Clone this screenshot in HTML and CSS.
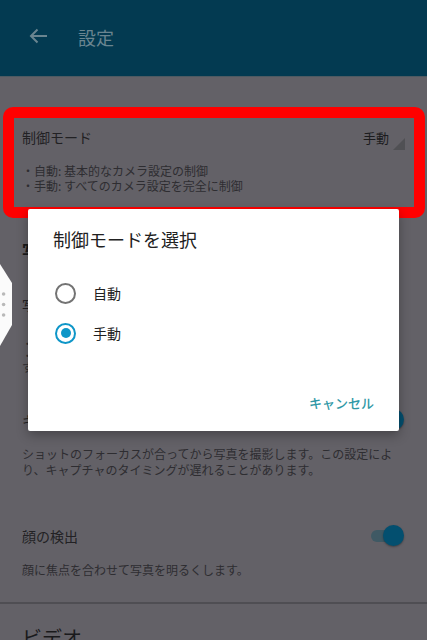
FILE: index.html
```html
<!DOCTYPE html>
<html lang="ja">
<head>
<meta charset="utf-8">
<title>設定</title>
<link rel="stylesheet" href="styles.css">
</head>
<body>
<header class="appbar">
  <svg class="back" width="19" height="16" viewBox="0 0 19 16"><path d="M18 8H2M8.5 1.5L2 8l6.5 6.5" fill="none" stroke="currentColor" stroke-width="2"/></svg>
  <h1 class="appbar-title">設定</h1>
</header>

<main class="content">
  <section class="pref pref-mode">
    <div class="pref-row">
      <span class="pref-title">制御モード</span>
      <span class="spinner">手動<span class="spinner-tri"></span></span>
    </div>
    <p class="pref-desc">・自動: 基本的なカメラ設定の制御<br>・手動: すべてのカメラ設定を完全に制御</p>
  </section>

  <h2 class="cat cat-photo">写真</h2>

  <section class="pref pref-size">
    <div class="pref-row"><span class="pref-title small">写真サイズ</span></div>
    <p class="pref-desc tiny">・標準: 12MP<br>・高解像度: 48MP<br>すべてのモードで使用できます。</p>
  </section>

  <section class="pref pref-focus">
    <div class="pref-row">
      <span class="pref-title">キャプチャ前にフォーカス</span>
      <span class="switch on"><span class="track"></span><span class="knob"></span></span>
    </div>
    <p class="pref-desc wide">ショットのフォーカスが合ってから写真を撮影します。この設定により、キャプチャのタイミングが遅れることがあります。</p>
  </section>

  <section class="pref pref-face">
    <div class="pref-row">
      <span class="pref-title">顔の検出</span>
      <span class="switch on"><span class="track"></span><span class="knob"></span></span>
    </div>
    <p class="pref-desc wide">顔に焦点を合わせて写真を明るくします。</p>
  </section>

  <hr class="divider">
  <h2 class="cat cat-video">ビデオ</h2>
</main>

<div class="highlight"></div>

<svg class="handle" width="13" height="84" viewBox="0 0 13 84">
  <polygon points="0,0 12,19 12,61 0,82" fill="#fbfbfb"/>
  <circle cx="3.6" cy="30" r="1.8" fill="#b9b9b9"/>
  <circle cx="3.6" cy="40.5" r="1.8" fill="#b9b9b9"/>
  <circle cx="3.6" cy="51" r="1.8" fill="#b9b9b9"/>
</svg>

<div class="dialog" role="dialog">
  <h3 class="dialog-title">制御モードを選択</h3>
  <ul class="radios">
    <li class="radio-row"><span class="radio"></span><span class="radio-label">自動</span></li>
    <li class="radio-row"><span class="radio checked"></span><span class="radio-label">手動</span></li>
  </ul>
  <div class="dialog-actions"><span class="btn-text">キャンセル</span></div>
</div>
</body>
</html>
```
FILE: styles.css
```css
* { box-sizing: border-box; }
html, body { margin: 0; padding: 0; }
body {
  width: 427px;
  height: 640px;
  overflow: hidden;
  background: #636167;
  font-family: "Noto Sans CJK JP", "Noto Sans", sans-serif;
  color: #222124;
  position: relative;
}
.appbar {
  height: 76px;
  background: #033a51;
  display: flex;
  align-items: center;
  padding-left: 29px;
  color: #6a8590;
  box-shadow: 0 1px 0 #4d5a62;
}
.back { display: block; margin-top: -4px; }
.appbar-title {
  margin: 0 0 0 30px;
  font-size: 18px;
  font-weight: 400;
  line-height: 24px;
  margin-top: -2px;
}
.content { padding: 0 22px; }
.pref-row {
  display: flex;
  align-items: center;
  justify-content: space-between;
  height: 20px;
}
.pref-title { font-size: 14px; line-height: 20px; color: #222124; }
.pref-title.small { font-size: 13px; }
.pref-desc {
  margin: 16px 0 0;
  font-size: 12px;
  line-height: 15px;
  color: #2e2d31;
}
.pref-desc.wide { line-height: 16px; }
.pref-desc.tiny { font-size: 11px; line-height: 12px; margin-top: 22px; }
.pref-mode { margin-top: 51px; }
.spinner {
  position: relative;
  font-size: 13px;
  line-height: 20px;
  color: #1c1c1e;
  padding-right: 18px;
  margin-right: -2px;
  margin-top: 2px;
}
.spinner-tri {
  position: absolute;
  right: 2px;
  top: 10px;
  width: 0; height: 0;
  border-left: 12px solid transparent;
  border-bottom: 12px solid #505054;
}
.cat {
  margin: 0;
  font-weight: 700;
  color: #1a1a1c;
}
.cat-photo { margin-top: 46px; font-size: 16px; line-height: 22px; }
.pref-size { margin-top: 34px; }
.pref-focus { margin-top: 37px; }
.pref-face { margin-top: 48px; }
.switch {
  position: relative;
  width: 34px;
  height: 22px;
  margin-right: 1px;
}
.switch .track {
  position: absolute;
  left: 1px; top: 5px;
  width: 30px; height: 12px;
  border-radius: 6px;
  background: #3f5964;
}
.switch .knob {
  position: absolute;
  right: 0; top: 0;
  width: 21px; height: 21px;
  border-radius: 50%;
  background: #034f6f;
  box-shadow: 0 1px 2px rgba(0,0,0,0.35);
}
.divider {
  margin: 24px -22px 0;
  border: 0;
  height: 2px;
  background: #4f4e53;
}
.cat-video {
  margin-top: 20px;
  font-size: 20px;
  line-height: 28px;
  font-weight: 400;
  color: #1a1a1c;
}

.highlight {
  position: absolute;
  left: 3px; top: 107px;
  width: 422px; height: 111px;
  border: 11px solid #ff0000;
  border-radius: 10px;
}
.handle {
  position: absolute;
  left: 0; top: 264px;
}

.dialog {
  position: absolute;
  left: 28px; top: 209px;
  width: 371px; height: 222px;
  background: #ffffff;
  border-radius: 2px;
  box-shadow: 0 4px 12px rgba(0,0,0,0.3);
  padding: 18px 0 0;
}
.dialog-title {
  margin: 0 0 0 25px;
  font-size: 18px;
  line-height: 24px;
  font-weight: 400;
  color: #212121;
}
.radios { list-style: none; margin: 22px 0 0; padding: 0 0 0 27px; }
.radio-row {
  display: flex;
  align-items: center;
  height: 40px;
}
.radio {
  width: 21px; height: 21px;
  border-radius: 50%;
  border: 2px solid #737373;
  position: relative;
}
.radio.checked { border-color: #0e96c8; }
.radio.checked::after {
  content: "";
  position: absolute;
  left: 3.5px; top: 3.5px;
  width: 10px; height: 10px;
  border-radius: 50%;
  background: #0e96c8;
}
.radio-label {
  margin-left: 17px;
  font-size: 14px;
  line-height: 20px;
  color: #212121;
}
.dialog-actions {
  display: flex;
  justify-content: flex-end;
  padding-right: 25px;
  margin-top: 40px;
}
.btn-text {
  font-size: 13px;
  line-height: 20px;
  font-weight: 500;
  color: #2f98a6;
}
```
